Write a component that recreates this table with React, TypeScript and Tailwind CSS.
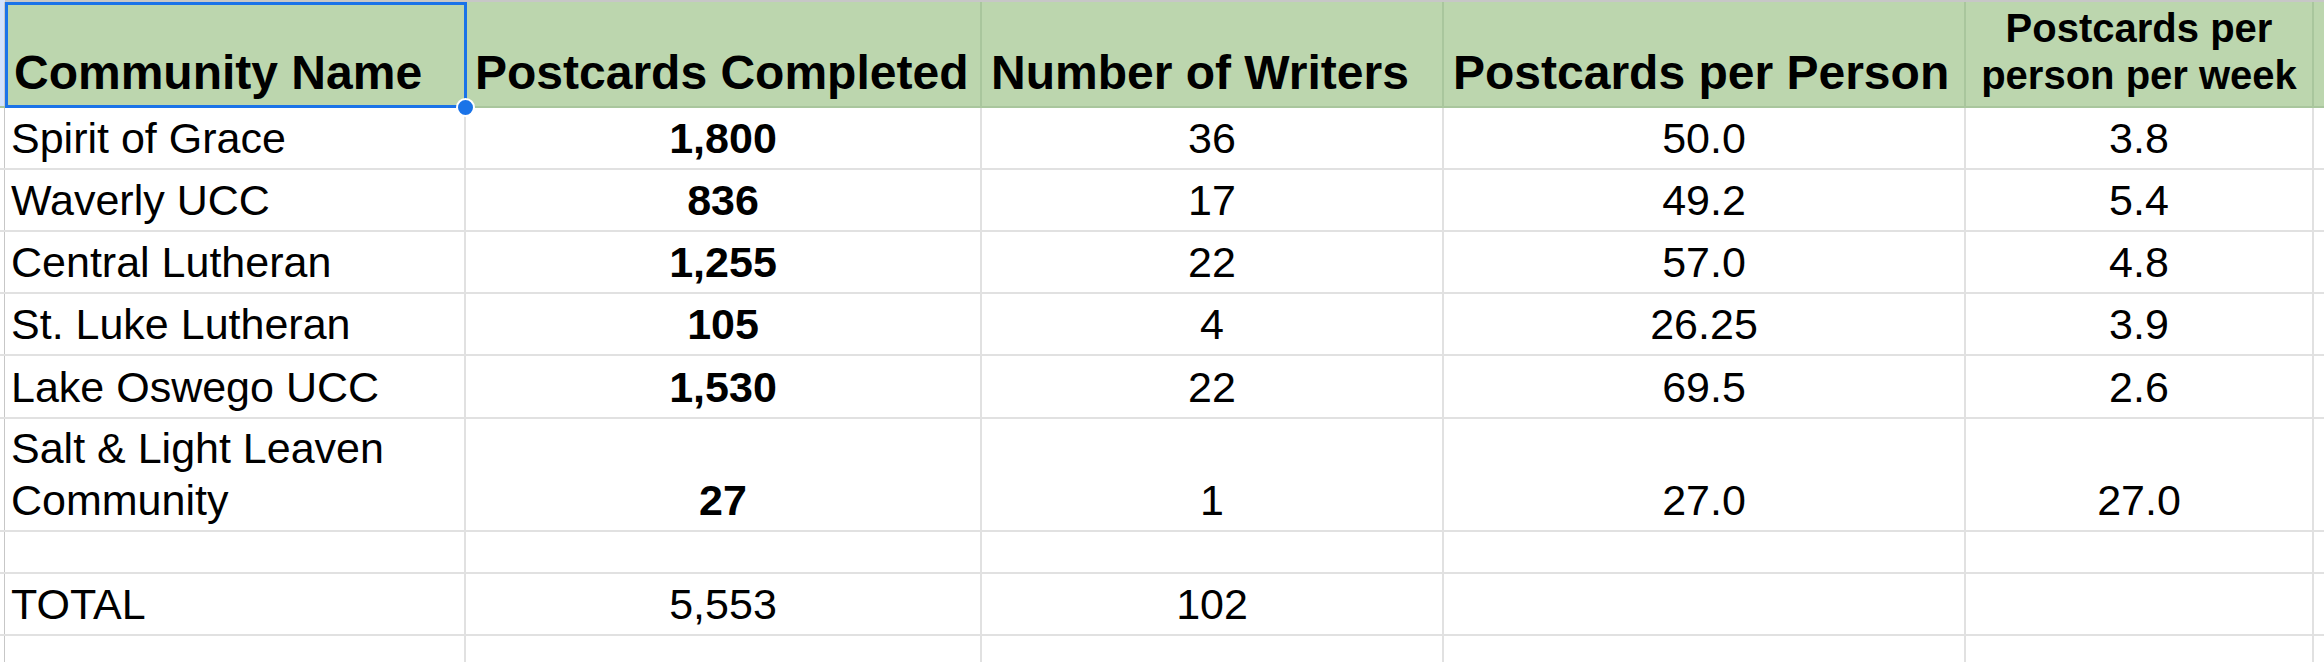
import React from 'react';

type Row = {
  name: string[];
  done: string;
  writers: string;
  perPerson: string;
  perWeek: string;
  bold?: boolean;
  h: string;
};

const rows: Row[] = [
  { name: ['Spirit of Grace'], done: '1,800', writers: '36', perPerson: '50.0', perWeek: '3.8', bold: true, h: 'h-[62px]' },
  { name: ['Waverly UCC'], done: '836', writers: '17', perPerson: '49.2', perWeek: '5.4', bold: true, h: 'h-[62px]' },
  { name: ['Central Lutheran'], done: '1,255', writers: '22', perPerson: '57.0', perWeek: '4.8', bold: true, h: 'h-[62px]' },
  { name: ['St. Luke Lutheran'], done: '105', writers: '4', perPerson: '26.25', perWeek: '3.9', bold: true, h: 'h-[62px]' },
  { name: ['Lake Oswego UCC'], done: '1,530', writers: '22', perPerson: '69.5', perWeek: '2.6', bold: true, h: 'h-[63px]' },
  { name: ['Salt & Light Leaven', 'Community'], done: '27', writers: '1', perPerson: '27.0', perWeek: '27.0', bold: true, h: 'h-[113px]' },
  { name: [], done: '', writers: '', perPerson: '', perWeek: '', h: 'h-[42px]' },
  { name: ['TOTAL'], done: '5,553', writers: '102', perPerson: '', perWeek: '', h: 'h-[62px]' },
  { name: [], done: '', writers: '', perPerson: '', perWeek: '', h: 'h-[62px]' },
];

const cell = 'flex items-end shrink-0 border-r-2 border-[#e1e1e1] pb-[4px]';

function BodyRow({ r }: { r: Row }) {
  return (
    <div className={`flex border-b-2 border-[#e1e1e1] ${r.h}`}>
      <div className="w-[5px] shrink-0 border-r border-[#c7c7c7] bg-white" />
      <div className={`${cell} w-[461px] px-[6px]`}>
        <div>
          {r.name.map((n) => (
            <div key={n}>{n}</div>
          ))}
        </div>
      </div>
      <div className={`${cell} w-[516px] justify-center ${r.bold ? 'font-bold' : ''}`}>{r.done}</div>
      <div className={`${cell} w-[462px] justify-center`}>{r.writers}</div>
      <div className={`${cell} w-[522px] justify-center`}>{r.perPerson}</div>
      <div className={`${cell} w-[348px] justify-center`}>{r.perWeek}</div>
      <div className="flex-1" />
    </div>
  );
}

export default function App() {
  const head = 'flex items-end shrink-0 border-r-2 border-[#a9c69d] pb-[6px] px-[9px] whitespace-nowrap';
  return (
    <div className="relative w-[2324px] h-[662px] overflow-hidden bg-white text-black font-['Liberation_Sans',Arial,sans-serif] text-[43px] leading-[52px]">
      <div className="flex h-[2px]">
        <div className="w-[5px] bg-[#d3e3fd]" />
        <div className="flex-1 bg-[#c7c7c7]" />
      </div>

      {/* header row */}
      <div className="flex h-[106px] bg-[#bcd6ae] border-b-2 border-[#a9c69d] font-bold text-[48px] leading-[54px]">
        <div className="w-[5px] shrink-0 bg-[#d3e3fd] border-r border-[#c7c7c7]" />
        <div className={`${head} w-[461px] px-[6px]`}>Community Name</div>
        <div className={`${head} w-[516px]`}>Postcards Completed</div>
        <div className={`${head} w-[462px]`}>Number of Writers</div>
        <div className={`${head} w-[522px]`}>Postcards per Person</div>
        <div className={`${head} w-[348px] justify-center text-center text-[40px] leading-[47px] pb-[7px]`}>
          Postcards per
          <br />
          person per week
        </div>
        <div className="flex-1" />
      </div>

      {rows.map((r, i) => (
        <BodyRow key={i} r={r} />
      ))}

      {/* selected cell A1 */}
      <div className="absolute left-[5px] top-[2px] w-[462px] h-[106px] border-[3px] border-[#1a73e8] pointer-events-none" />
      <div className="absolute left-[456px] top-[98px] w-[19px] h-[19px] rounded-full bg-[#1a73e8] border-2 border-white" />
    </div>
  );
}
